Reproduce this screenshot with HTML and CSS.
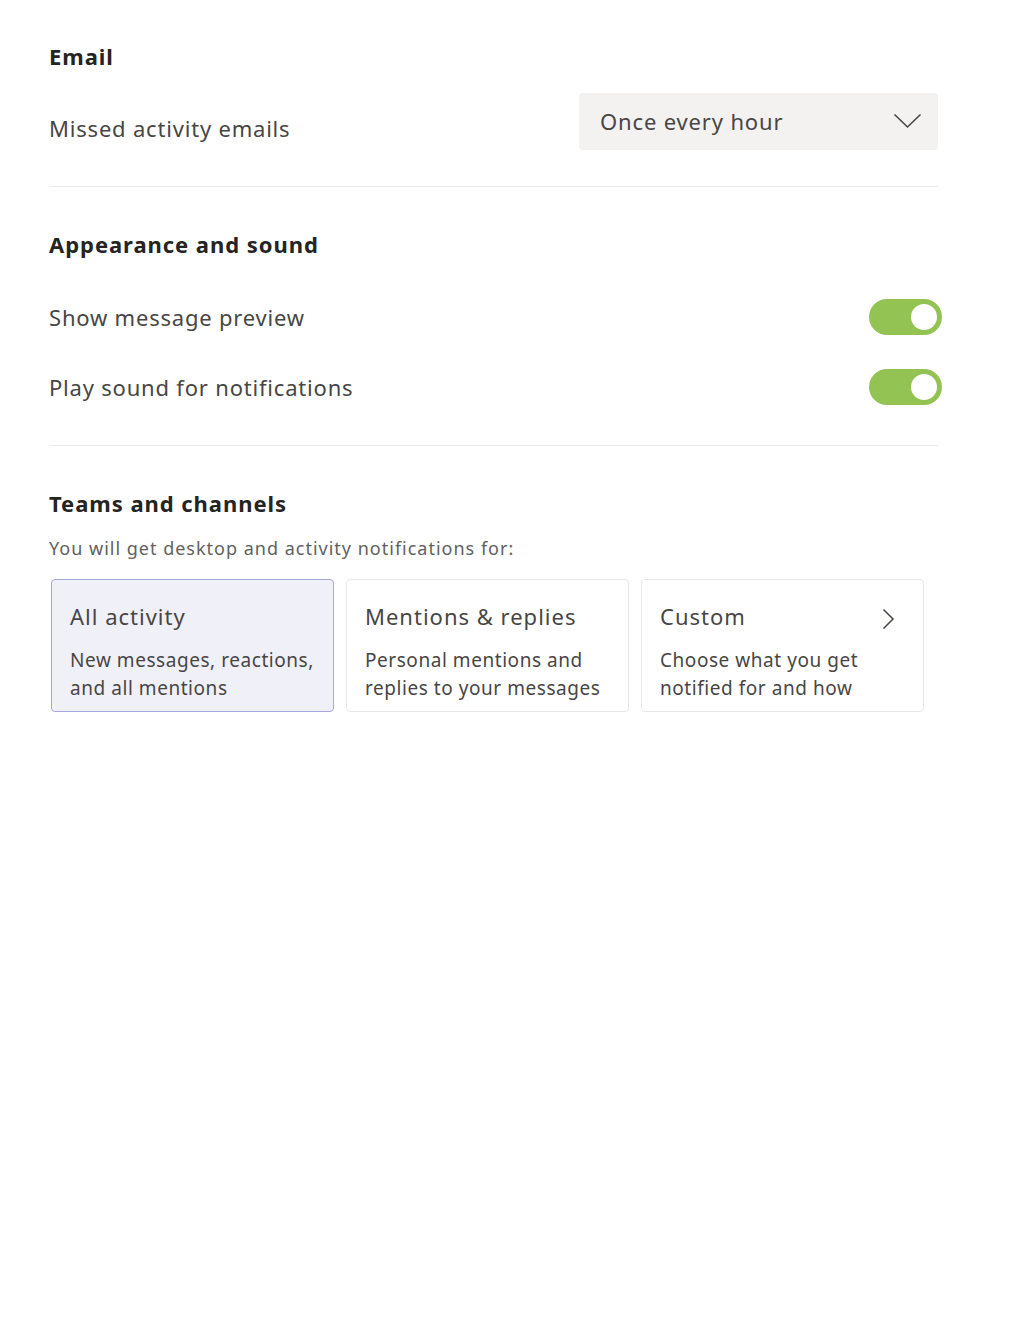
FILE: index.html
```html
<!DOCTYPE html>
<html lang="en">
<head>
<meta charset="utf-8">
<title>Notifications</title>
<link rel="stylesheet" href="styles.css">
</head>
<body>
<main class="settings">
  <section class="section">
    <h2 class="heading">Email</h2>
    <div class="rows">
      <div class="row row-email">
        <span class="label">Missed activity emails</span>
        <div class="dropdown">
          <span class="dropdown-text">Once every hour</span>
          <svg class="chevron-down" width="29" height="16" viewBox="0 0 29 16"><path d="M1.5 1.5 L14.5 14 L27.5 1.5" fill="none" stroke="#484644" stroke-width="1.6"/></svg>
        </div>
      </div>
    </div>
  </section>
  <hr class="divider">
  <section class="section">
    <h2 class="heading">Appearance and sound</h2>
    <div class="rows rows-toggles">
      <div class="row">
        <span class="label">Show message preview</span>
        <span class="toggle"><span class="knob"></span></span>
      </div>
      <div class="row">
        <span class="label">Play sound for notifications</span>
        <span class="toggle"><span class="knob"></span></span>
      </div>
    </div>
  </section>
  <hr class="divider">
  <section class="section">
    <h2 class="heading">Teams and channels</h2>
    <p class="sub">You will get desktop and activity notifications for:</p>
    <div class="cards">
      <div class="card card-selected">
        <div class="card-title">All activity</div>
        <div class="card-desc">New messages, reactions, and all mentions</div>
      </div>
      <div class="card">
        <div class="card-title">Mentions &amp; replies</div>
        <div class="card-desc">Personal mentions and replies to your messages</div>
      </div>
      <div class="card">
        <div class="card-title">Custom
          <svg class="chevron-right" width="13" height="22" viewBox="0 0 13 22"><path d="M1.5 1.5 L11 11 L1.5 20.5" fill="none" stroke="#484644" stroke-width="1.5"/></svg>
        </div>
        <div class="card-desc">Choose what you get notified for and how</div>
      </div>
    </div>
  </section>
</main>
</body>
</html>
```

FILE: styles.css
```css
* { box-sizing: border-box; }
html, body { margin: 0; padding: 0; background: #ffffff; }
body {
  font-family: "Noto Sans", "Open Sans", "Liberation Sans", sans-serif;
  color: #484644;
}
.settings {
  width: 942px;
  padding: 39px 0 0 49px;
}
.section { display: flex; flex-direction: column; }
.heading {
  margin: 0;
  font-size: 22px;
  font-weight: 700;
  letter-spacing: 0.95px;
  color: #252423;
  line-height: 34px;
}
.rows {
  display: flex;
  flex-direction: column;
  margin-top: 20px;
}
.rows-toggles { margin-top: 21px; }
.row {
  display: flex;
  align-items: center;
  justify-content: space-between;
  height: 70px;
  width: 893px;
}
.row-email { width: 889px; }
.label {
  font-size: 22px;
  letter-spacing: 0.8px;
  color: #484644;
}
.dropdown {
  width: 359px;
  height: 57px;
  background: #f3f2f1;
  border-radius: 4px;
  display: flex;
  align-items: center;
  justify-content: space-between;
  padding: 0 16px 0 21px;
  margin-top: -14px;
}
.dropdown-text {
  font-size: 22px;
  letter-spacing: 0.85px;
  color: #484644;
}
.divider {
  border: 0;
  border-top: 1px solid #edebe9;
  margin: 23px 0 40px 0;
  width: 889px;
}
.toggle {
  width: 73px;
  height: 36px;
  border-radius: 18px;
  background: #92c353;
  display: flex;
  align-items: center;
  justify-content: flex-end;
  padding-right: 5px;
}
.knob {
  width: 26px;
  height: 26px;
  border-radius: 50%;
  background: #ffffff;
}
.sub {
  margin: 16px 0 0 0;
  font-size: 18px;
  letter-spacing: 1px;
  color: #616161;
  line-height: 24px;
}
.cards {
  display: grid;
  grid-template-columns: repeat(3, 283px);
  gap: 12px;
  margin: 19px 0 0 2px;
}
.card {
  height: 133px;
  border: 1px solid #e8e8e8;
  border-radius: 4px;
  background: #ffffff;
  padding: 21px 18px 0 18px;
}
.card-selected {
  background: #f0f0f9;
  border-color: #a6a7dc;
}
.card-title {
  font-size: 22px;
  letter-spacing: 1px;
  color: #484644;
  line-height: 30px;
  display: flex;
  align-items: center;
  justify-content: space-between;
}
.chevron-right { margin-right: 10px; margin-top: 6px; }
.card-desc {
  margin-top: 15px;
  font-size: 19px;
  letter-spacing: 0.55px;
  line-height: 28px;
  color: #484644;
}
```
